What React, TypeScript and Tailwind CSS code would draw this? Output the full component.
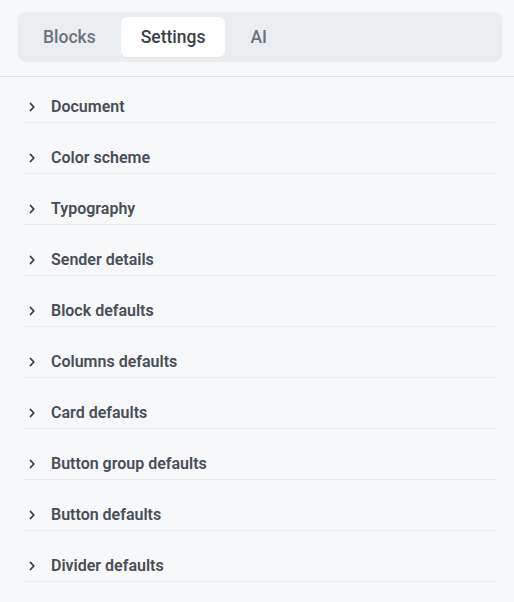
import { useState } from 'react';

const sections = [
  'Document',
  'Color scheme',
  'Typography',
  'Sender details',
  'Block defaults',
  'Columns defaults',
  'Card defaults',
  'Button group defaults',
  'Button defaults',
  'Divider defaults',
];

const tabs = ['Blocks', 'Settings', 'AI'];

function Chevron() {
  return (
    <svg width="10" height="10" viewBox="0 0 10 10" fill="none" className="shrink-0">
      <path d="M3.5 1.5 L6.8 5 L3.5 8.5" stroke="#363b43" strokeWidth="1.8" strokeLinecap="round" strokeLinejoin="round" />
    </svg>
  );
}

export default function App() {
  const [tab, setTab] = useState('Settings');

  return (
    <div className="w-[514px] h-[602px] bg-[#f7f8fa] overflow-hidden" style={{ fontFamily: 'Roboto, "Liberation Sans", sans-serif' }}>
      <div className="pt-3 pl-[18px] pr-3 pb-[14px] border-b border-[#dfe2e6]">
        <div className="flex gap-[5px] p-[5px] rounded-lg bg-[#ebeef1]">
          {tabs.map(t => (
            <button
              key={t}
              onClick={() => setTab(t)}
              className={
                'h-10 px-5 rounded-md text-[17.5px] font-medium ' +
                (tab === t ? 'bg-white text-[#3b4049] shadow-[0_1px_1px_rgba(0,0,0,0.03)]' : 'text-[#6d737c]')
              }
            >
              {t}
            </button>
          ))}
        </div>
      </div>
      <div className="pl-[23px] pr-[17px]">
        {sections.map(s => (
          <div key={s} className="pt-[19px] first:pt-[14px] border-b border-[#e8ebee]">
            <button className="h-[31px] w-full flex items-center gap-[14px] pl-[4px] text-left">
              <Chevron />
              <span className="text-[16px] font-semibold text-[#494e56]">{s}</span>
            </button>
          </div>
        ))}
      </div>
    </div>
  );
}
